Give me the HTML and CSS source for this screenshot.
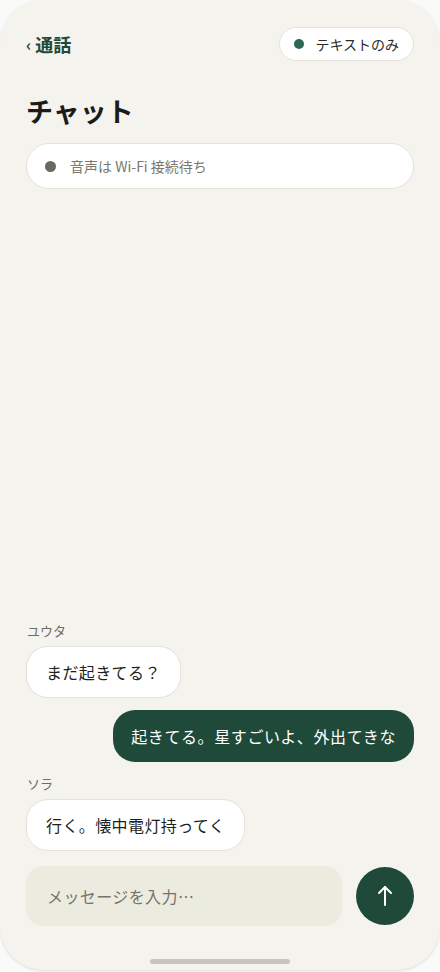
FILE: index.html
```html
<html>
  <head>
    <title>チャット</title>
    <meta name="viewport" content="width=device-width, initial-scale=1">
    <link rel="stylesheet" href="styles.css">
  </head>
  <body>
    <div class="phone">
      <div class="topbar">
        <a class="back" href="#"><span class="chev">‹</span>通話</a>
        <div class="mode"><span class="dot green"></span>テキストのみ</div>
      </div>
      <h1 class="title">チャット</h1>
      <div class="status"><span class="dot gray"></span>音声は Wi-Fi 接続待ち</div>

      <div class="chat">
        <div class="group">
          <div class="name">ユウタ</div>
          <div class="bubble in">まだ起きてる？</div>
        </div>
        <div class="group out">
          <div class="bubble mine">起きてる。星すごいよ、外出てきな</div>
        </div>
        <div class="group">
          <div class="name">ソラ</div>
          <div class="bubble in">行く。懐中電灯持ってく</div>
        </div>
      </div>

      <div class="compose">
        <div class="input">メッセージを入力…</div>
        <button class="send" aria-label="送信">
          <svg width="24" height="24" viewBox="0 0 24 24" fill="none" stroke="#fff" stroke-width="2" stroke-linecap="round" stroke-linejoin="round">
            <path d="M12 21V3"/>
            <path d="M6 9l6-6 6 6"/>
          </svg>
        </button>
      </div>
      <div class="home"></div>
    </div>
  </body>
</html>
```

FILE: styles.css
```css
* { box-sizing: border-box; }
body {
  margin: 0;
  background: #fafaf9;
  font-family: "Noto Sans CJK JP", "Noto Sans", sans-serif;
  color: #1d1d1b;
}

.phone {
  width: 440px;
  height: 970px;
  background: #f4f3ee;
  border-radius: 44px;
  box-shadow: 0 1px 3px rgba(0, 0, 0, 0.12);
  padding: 27px 26px 6px;
  display: flex;
  flex-direction: column;
  overflow: hidden;
}

.topbar {
  display: flex;
  justify-content: space-between;
  align-items: center;
  height: 34px;
}

.back {
  color: #1f4a3a;
  text-decoration: none;
  font-size: 18px;
  font-weight: 700;
  display: flex;
  align-items: center;
  gap: 4px;
}
.chev {
  font-size: 16px;
  font-weight: 700;
  margin-top: -1px;
}

.mode {
  height: 34px;
  background: #fff;
  border: 1px solid #e4e2da;
  border-radius: 17px;
  padding: 0 14px 0 14px;
  display: flex;
  align-items: center;
  gap: 11px;
  font-size: 14px;
  color: #2c2b28;
}

.dot {
  display: inline-block;
  border-radius: 50%;
  flex: none;
}
.dot.green {
  width: 10px;
  height: 10px;
  background: #2a6a52;
}
.dot.gray {
  width: 11px;
  height: 11px;
  background: #6b6862;
}

.title {
  margin: 32px 0 0;
  font-size: 27px;
  line-height: 36px;
  font-weight: 700;
  letter-spacing: 0;
  color: #1b1b19;
}

.status {
  margin-top: 14px;
  height: 46px;
  background: #fff;
  border: 1px solid #e4e2da;
  border-radius: 23px;
  display: flex;
  align-items: center;
  gap: 14px;
  padding: 0 18px;
  font-size: 14px;
  color: #7a776f;
}

.chat {
  flex: 1;
  display: flex;
  flex-direction: column;
  justify-content: flex-end;
  gap: 12px;
  padding-bottom: 15px;
}

.group {
  display: flex;
  flex-direction: column;
  align-items: flex-start;
  gap: 6px;
}
.group.out {
  align-items: flex-end;
  margin-bottom: 1px;
}

.name {
  font-size: 13px;
  line-height: 18px;
  color: #6f6c65;
  padding-left: 1px;
}

.bubble {
  font-size: 16px;
  line-height: 24px;
  border-radius: 22px;
  letter-spacing: 0.4px;
}
.bubble.in {
  background: #fff;
  border: 1px solid #e4e2da;
  padding: 13px 19px;
  color: #1f1f1d;
}
.bubble.mine {
  background: #1f4a3a;
  color: #fff;
  letter-spacing: 0.6px;
  padding: 14px 18px;
}

.compose {
  display: flex;
  align-items: center;
  gap: 14px;
}

.input {
  flex: 1;
  height: 60px;
  background: #ecebe0;
  border-radius: 17px;
  display: flex;
  align-items: center;
  padding: 0 21px;
  font-size: 16px;
  letter-spacing: 0.4px;
  color: #76736a;
}

.send {
  width: 58px;
  height: 58px;
  border: none;
  border-radius: 50%;
  background: #1f4a3a;
  display: flex;
  align-items: center;
  justify-content: center;
  padding: 0;
}

.home {
  width: 140px;
  height: 5px;
  border-radius: 3px;
  background: #c6c5bf;
  margin: 33px auto 0;
}
```
